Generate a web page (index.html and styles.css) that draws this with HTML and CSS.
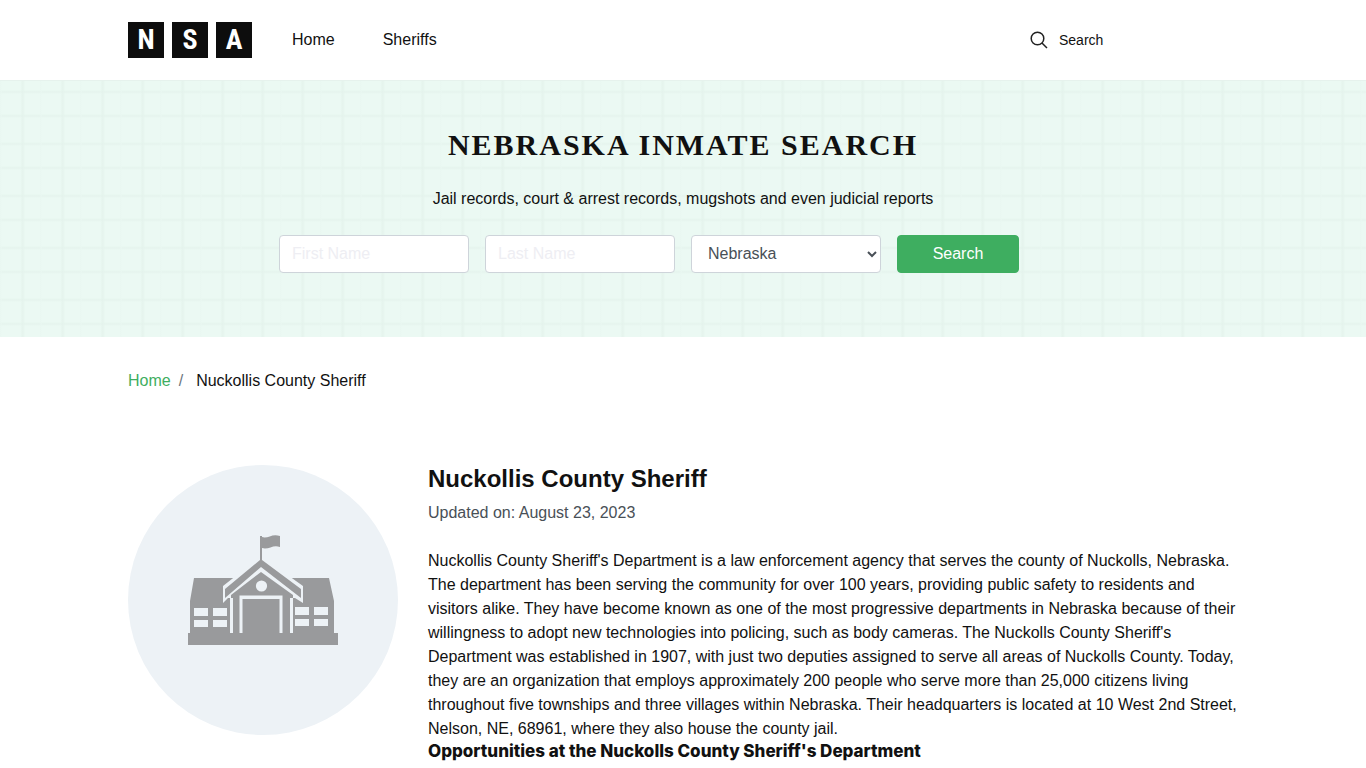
FILE: index.html
```html
<!DOCTYPE html>
<html lang="en">
<head>
  <meta charset="UTF-8" />
  <meta name="viewport" content="width=device-width, initial-scale=1.0"/>
  <title>Nuckollis County Sheriff</title>
  <link rel="stylesheet" href="styles.css">
</head>
<body>
  <header class="site-header">
    <div class="container header-row">
      <a class="logo" href="#" aria-label="NSA home">
        <span>N</span>
        <span>S</span>
        <span>A</span>
      </a>
      <nav class="main-nav">
        <a href="#">Home</a>
        <a href="#">Sheriffs</a>
      </nav>
      <a class="search-link" href="#">
        <svg width="18" height="18" viewBox="0 0 18 18" fill="none" stroke="#222" stroke-width="1.5">
          <circle cx="7.5" cy="7.5" r="6.3"/>
          <path d="M12 12l5 5"/>
        </svg>
        Search
      </a>
    </div>
  </header>

  <section class="hero">
    <h1>NEBRASKA INMATE SEARCH</h1>
    <p>Jail records, court &amp; arrest records, mugshots and even judicial reports</p>
    <form class="search-form">
      <input type="text" placeholder="First Name" aria-label="First Name">
      <input type="text" placeholder="Last Name" aria-label="Last Name">
      <select aria-label="State">
        <option>Nebraska</option>
      </select>
      <button type="submit">Search</button>
    </form>
  </section>

  <main class="container">
    <nav class="breadcrumb" aria-label="Breadcrumb">
      <a href="#">Home</a>
      <span class="sep">/</span>
      <span>Nuckollis County Sheriff</span>
    </nav>

    <article class="profile">
      <div class="avatar">
        <svg width="150" height="110" viewBox="0 0 150 110">
          <g fill="#999a9c">
            <path d="M74 2c6 2 10-4 18-1v11c-7-3-11 3-18 1z"/>
            <path d="M6 43h135l5 23v32h4v12H0V98h2V66z"/>
          </g>
          <path fill="#edf2f6" d="M73 21L115 51v17l-8-5h-2v35H42V63h-2l-5 5V51z"/>
          <path fill="#999a9c" d="M72 1h2v24l39 29v9L73 32 37 63V54l35-29z"/>
          <path fill="#999a9c" d="M73 37l32 23v3h-3v35H45V63h-2v-3z"/>
          <path fill="none" stroke="#edf2f6" stroke-width="3" d="M53 98V62h40v36"/>
          <path fill="none" stroke="#edf2f6" stroke-width="2" d="M52 63h42"/>
          <circle cx="73.5" cy="51" r="5.6" fill="#edf2f6"/>
          <path fill="#edf2f6" d="M6 73h14v8H6zM25 73h14v8H25zM6 85h14v7H6zM25 85h14v7H25zM107 72h14v8h-14zM126 72h14v8h-14zM107 84h14v7h-14zM126 84h14v7h-14z"/>
        </svg>
      </div>
      <div class="details">
        <h2>Nuckollis County Sheriff</h2>
        <p class="updated">Updated on: August 23, 2023</p>
        <p>Nuckollis County Sheriff's Department is a law enforcement agency that serves the county of Nuckolls, Nebraska. The department has been serving the community for over 100 years, providing public safety to residents and visitors alike. They have become known as one of the most progressive departments in Nebraska because of their willingness to adopt new technologies into policing, such as body cameras. The Nuckolls County Sheriff's Department was established in 1907, with just two deputies assigned to serve all areas of Nuckolls County. Today, they are an organization that employs approximately 200 people who serve more than 25,000 citizens living throughout five townships and three villages within Nebraska. Their headquarters is located at 10 West 2nd Street, Nelson, NE, 68961, where they also house the county jail.</p>
        <h3>Opportunities at the Nuckolls County Sheriff's Department</h3>
      </div>
    </article>
  </main>
</body>
</html>
```
FILE: styles.css
```css
* {
  box-sizing: border-box;
}
body {
  margin: 0;
  font-family: "Liberation Sans", Arial, sans-serif;
  font-size: 16px;
  line-height: 24px;
  color: #111;
  background-color: #fff;
}
h1, h2, h3, p {
  margin: 0;
}
a {
  color: inherit;
  text-decoration: none;
}
.container {
  max-width: 1140px;
  margin: 0 auto;
  padding: 0 15px;
}

/* header */
.site-header {
  border-bottom: 1px solid #e6f2ed;
}
.header-row {
  display: flex;
  align-items: center;
  height: 80px;
}
.logo {
  display: flex;
  gap: 8px;
}
.logo span {
  width: 36px;
  height: 36px;
  background-color: #0d0d0d;
  color: #fff;
  font-family: "Roboto Condensed", "Roboto", sans-serif;
  font-weight: 700;
  font-size: 28px;
  line-height: 36px;
  text-align: center;
}
.main-nav {
  display: flex;
  gap: 48px;
  margin-left: 40px;
}
.search-link {
  display: flex;
  align-items: center;
  gap: 11px;
  width: 208px;
  margin-left: auto;
  font-size: 14px;
}

/* search banner */
.hero {
  padding: 46px 15px 64px;
  text-align: center;
  background-color: #ebf9f3;
  background-image:
    linear-gradient(90deg, transparent 20px, #e5f4ed 23px, transparent 25px),
    linear-gradient(90deg, transparent, #e9f7f1 1px, transparent 2px),
    linear-gradient(transparent 9px, #e5f4ed 11px, transparent 13px, transparent 33px, #e5f4ed 35px, transparent 37px);
  background-size: 40px 52px;
}
.hero h1 {
  margin-bottom: 24px;
  font-family: "Liberation Serif", "Times New Roman", serif;
  font-size: 30px;
  line-height: 36px;
  letter-spacing: 2px;
}
.search-form {
  display: grid;
  grid-template-columns: repeat(4, 1fr);
  gap: 16px;
  max-width: 808px;
  margin: 24px auto 0;
}
.search-form input,
.search-form select,
.search-form button {
  width: 100%;
  height: 38px;
  padding: 6px 12px;
  border: 1px solid #ced4da;
  border-radius: 4px;
  background-color: #fff;
  color: #495057;
  font: inherit;
}
.search-form select {
  padding-bottom: 8px;
}
.search-form input::placeholder {
  color: #eeeef3;
}
.search-form button {
  width: 122px;
  border-color: #3eae60;
  background-color: #3eae60;
  color: #fff;
}

/* page content */
.breadcrumb {
  display: flex;
  gap: 8px;
  padding: 32px 0;
}
.breadcrumb a {
  color: #3eae60;
}
.breadcrumb .sep {
  margin-right: 5px;
  color: #6c757d;
}
.profile {
  display: flex;
  align-items: flex-start;
  gap: 30px;
  margin-top: 40px;
}
.avatar {
  display: flex;
  flex: none;
  align-items: center;
  justify-content: center;
  width: 270px;
  height: 270px;
  padding-bottom: 20px;
  border-radius: 50%;
  background-color: #edf2f6;
}
.details h2 {
  font-size: 24px;
  line-height: 28px;
}
.details .updated {
  margin: 8px 0 24px;
  color: #495057;
}
.details h3 {
  font-family: "Inter", sans-serif;
  font-weight: 800;
  font-size: 17px;
  line-height: 20px;
}
```
